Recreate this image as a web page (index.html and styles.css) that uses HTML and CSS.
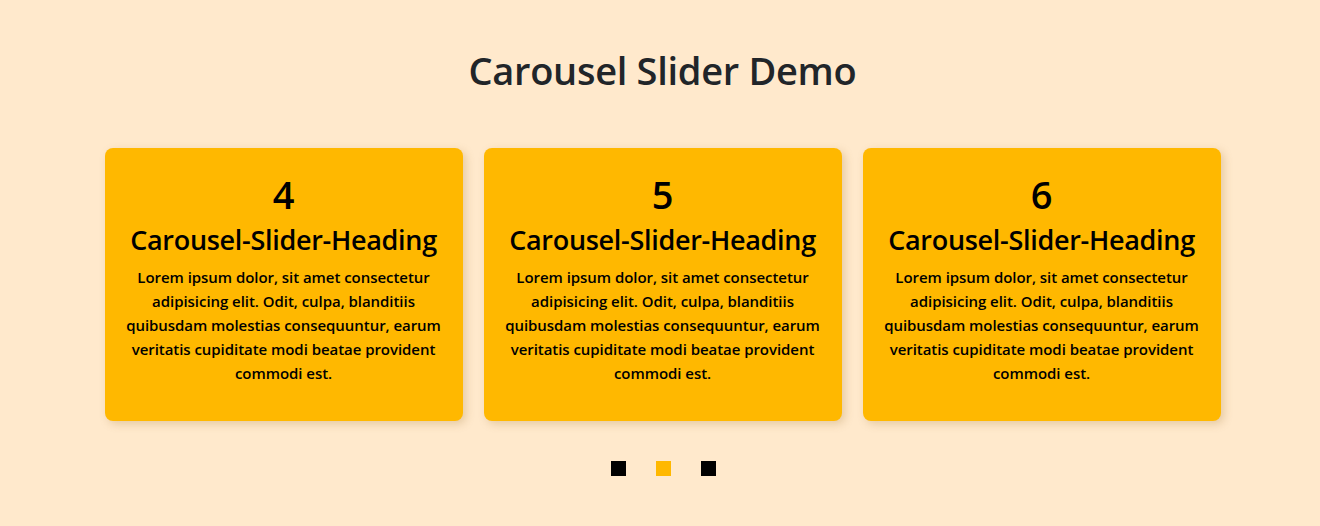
FILE: index.html
```html
<!DOCTYPE html>
<html lang="en">
<head>
<meta charset="utf-8">
<title>Carousel Slider Demo</title>
<link rel="stylesheet" href="styles.css">
</head>
<body>
<main class="page">
  <h1 class="title">Carousel Slider Demo</h1>
  <div class="track">
    <div class="card">
      <div class="num">4</div>
      <h2 class="heading">Carousel-Slider-Heading</h2>
      <p class="text">Lorem ipsum dolor, sit amet consectetur adipisicing elit. Odit, culpa, blanditiis quibusdam molestias consequuntur, earum veritatis cupiditate modi beatae provident commodi est.</p>
    </div>
    <div class="card">
      <div class="num">5</div>
      <h2 class="heading">Carousel-Slider-Heading</h2>
      <p class="text">Lorem ipsum dolor, sit amet consectetur adipisicing elit. Odit, culpa, blanditiis quibusdam molestias consequuntur, earum veritatis cupiditate modi beatae provident commodi est.</p>
    </div>
    <div class="card">
      <div class="num">6</div>
      <h2 class="heading">Carousel-Slider-Heading</h2>
      <p class="text">Lorem ipsum dolor, sit amet consectetur adipisicing elit. Odit, culpa, blanditiis quibusdam molestias consequuntur, earum veritatis cupiditate modi beatae provident commodi est.</p>
    </div>
  </div>
  <div class="dots">
    <span class="dot"></span>
    <span class="dot active"></span>
    <span class="dot"></span>
  </div>
</main>
</body>
</html>
```
FILE: styles.css
```css
* { box-sizing: border-box; }
html, body { margin: 0; padding: 0; }
body {
  background: #ffe9cc;
  font-family: "Open Sans", "Noto Sans", sans-serif;
  color: #000;
  width: 1320px;
  height: 526px;
  overflow: hidden;
}
.page {
  display: flex;
  flex-direction: column;
  align-items: center;
  padding: 44px 0 0 5px;
}
.title {
  margin: 0;
  font-size: 38px;
  font-weight: 600;
  color: #212529;
  line-height: 52px;
  letter-spacing: -0.3px;
}
.track {
  margin-top: 52px;
  display: flex;
  gap: 21px;
}
.card {
  width: 358px;
  height: 273px;
  background: #ffb800;
  border-radius: 8px;
  box-shadow: 3px 3px 8px rgba(150, 110, 40, 0.25);
  display: flex;
  flex-direction: column;
  align-items: center;
  text-align: center;
  padding: 22px 12px 0;
}
.num {
  font-size: 38px;
  font-weight: 600;
  line-height: 48px;
}
.heading {
  margin: 4px 0 0;
  font-size: 27px;
  font-weight: 600;
  line-height: 36px;
  letter-spacing: -0.3px;
}
.text {
  margin: 7px 0 0;
  font-size: 15px;
  font-weight: 600;
  line-height: 24px;
  letter-spacing: -0.05px;
}
.dots {
  margin-top: 40px;
  padding-left: 1px;
  display: flex;
  gap: 30px;
}
.dot {
  width: 15px;
  height: 15px;
  background: #000;
}
.dot.active { background: #ffb800; }
```
